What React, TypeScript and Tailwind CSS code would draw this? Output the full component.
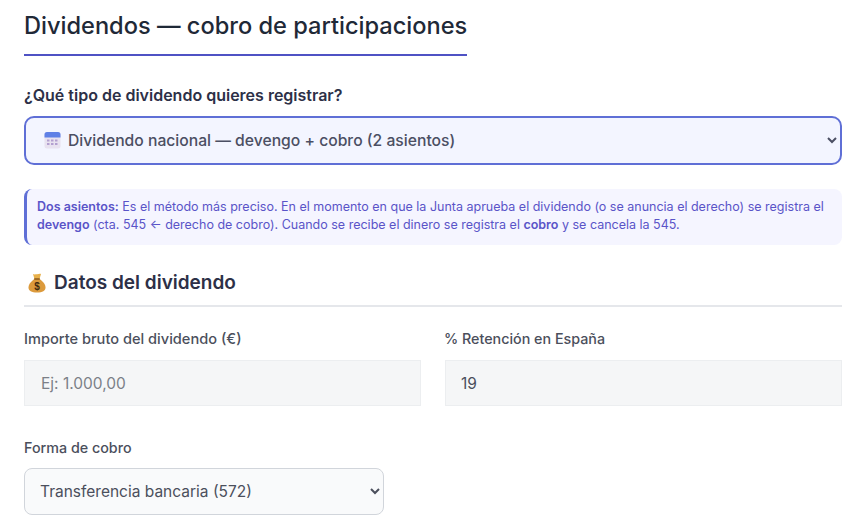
export default function App() {
  return (
    <div className="w-[859px] h-[520px] overflow-hidden bg-white pl-[24px] pr-[17px] font-['Inter','Noto_Sans',sans-serif] text-[#2d3047]">
      <h2 className="inline-block text-[23.6px] leading-[26px] font-medium text-[#1f2937] pt-[13px] pb-[15px] border-b-2 border-[#4f52c4]">
        Dividendos — cobro de participaciones
      </h2>
      <label className="block mt-[29px] mb-[11px] text-[16px] leading-[20px] font-semibold text-[#2d3047]">
        ¿Qué tipo de dividendo quieres registrar?
      </label>
      <div className="relative">
        <select
          defaultValue="a"
          className="block w-[818px] h-[49px] rounded-[10px] border-2 border-[#5f6fd6] bg-[#f3f5ff] pl-[38px] pr-[2px] text-[15.7px] font-medium text-[#4b4f63]"
        >
          <option value="a">Dividendo nacional — devengo + cobro (2 asientos)</option>
        </select>
        <svg className="absolute left-[20px] top-[15px] h-[18px] w-[17px]" viewBox="0 0 17 18">
          <rect x="0.5" y="1" width="16" height="16.5" rx="2.5" fill="#e8e2f0" />
          <path d="M0.5 6.500V3.500A2.500 2.500 0 0 1 3 1h11a2.500 2.500 0 0 1 2.500 2.500v3z" fill="#5f80e6" />
          <g fill="#b3a0d0">
            <rect x="3" y="8.500" width="2.500" height="2" /><rect x="7" y="8.500" width="2.500" height="2" /><rect x="11" y="8.500" width="2.500" height="2" />
            <rect x="3" y="12" width="2.500" height="2" /><rect x="7" y="12" width="2.500" height="2" /><rect x="11" y="12" width="2.500" height="2" />
          </g>
        </svg>
      </div>
      <div className="mt-[24px] w-[818px] h-[56px] rounded-[8px] border-l-[3px] border-[#5f6fd6] bg-[#f5f5ff] pl-[10px] pt-[9px] text-[12.5px] leading-[18px] text-[#5a54c8]">
        <p>
          <strong className="font-semibold">Dos asientos:</strong> Es el método más preciso. En el momento en que la Junta aprueba el dividendo (o se anuncia el derecho) se registra el
          <br />
          <strong className="font-semibold">devengo</strong> (cta. 545 ← derecho de cobro). Cuando se recibe el dinero se registra el <strong className="font-semibold">cobro</strong> y se cancela la 545.
        </p>
      </div>
      <h3 className="mt-[25px] flex items-center gap-[8px] border-b-2 border-[#e5e7eb] pb-[9px] pl-[4px] text-[19px] leading-[26px] font-semibold text-[#2d3047]">
        <svg className="h-[20px] w-[18px]" viewBox="0 0 18 20">
          <path d="M5 1c1.500.8 2.500.2 4 .2s2.500-.6 4-.2L11.500 6h-5z" fill="#e8b04a" />
          <path d="M6.500 6c-3 2-6 5-6 8.500C.5 18 3.500 19.500 9 19.500s8.500-1.500 8.500-5C17.500 11 14.500 8 11.500 6z" fill="#dc9a3c" />
          <rect x="6" y="5.200" width="6" height="1.500" rx="0.700" fill="#8a5a1c" />
          <text x="9" y="17" textAnchor="middle" fontSize="10" fontWeight="700" fill="#3f2a10" fontFamily="Liberation Sans, sans-serif">$</text>
        </svg>
        <span>Datos del dividendo</span>
      </h3>
      <div className="mt-[23px] grid w-[818px] grid-cols-[397px_397px] gap-x-[24px]">
        <div>
          <label className="block mb-[12px] text-[14.6px] leading-[18px] font-medium text-[#4b4f5c]">Importe bruto del dividendo (€)</label>
          <input
            placeholder="Ej: 1.000,00"
            className="block h-[46px] w-[397px] border border-[#eceef0] bg-[#f5f6f7] px-[16px] text-[15.500px] text-[#4b4f5c] placeholder:text-[#7b7f87]"
          />
        </div>
        <div>
          <label className="block mb-[12px] -ml-[1px] text-[14.3px] leading-[18px] font-medium text-[#4b4f5c]">% Retención en España</label>
          <input
            defaultValue="19"
            className="block h-[46px] w-[397px] border border-[#eceef0] bg-[#f5f6f7] px-[15px] text-[15.500px] text-[#4b4f5c]"
          />
        </div>
      </div>
      <label className="block mt-[33px] mb-[11px] text-[14.3px] leading-[18px] font-medium text-[#4b4f5c]">Forma de cobro</label>
      <select
        defaultValue="t"
        className="block h-[47px] w-[360px] rounded-[8px] border border-[#d1d5db] bg-[#f9fafb] pl-[11px] pr-[2px] text-[15.500px] text-[#4b4f5c]"
      >
        <option value="t">Transferencia bancaria (572)</option>
      </select>
    </div>
  );
}
